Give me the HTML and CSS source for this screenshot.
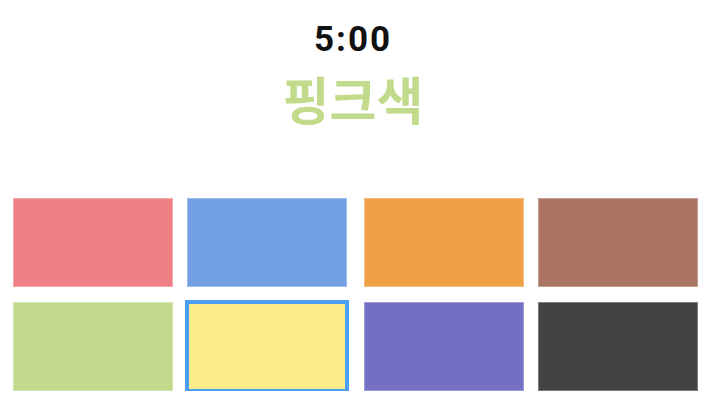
FILE: index.html
```html
<!DOCTYPE html>
<html lang="ko">
  <head>
    <meta charset="UTF-8" />
    <meta name="viewport" content="width=device-width, initial-scale=1.0" />
    <title>Color Picker</title>
    <link rel="stylesheet" href="styles.css">
  </head>
  <body>
    <div class="content">
      <div class="header">
        <div class="timer">5:00</div>
        <div class="color-name">핑크색</div>
      </div>
      <div class="palette">
        <div class="swatch red"></div>
        <div class="swatch blue"></div>
        <div class="swatch orange"></div>
        <div class="swatch brown"></div>
        <div class="swatch green"></div>
        <div class="swatch yellow selected"></div>
        <div class="swatch purple"></div>
        <div class="swatch dark"></div>
      </div>
    </div>
  </body>
</html>
```

FILE: styles.css
```css
body {
  font-family: Roboto, "Noto Sans CJK KR", sans-serif;
  margin: 0;
  background-color: #ffffff;
}
.content {
  padding: 0 16px 0 13px;
}
.header {
  display: flex;
  flex-direction: column;
  align-items: center;
  padding: 20px 5px 0 0;
}
.timer {
  font-size: 35px;
  font-weight: 700;
  line-height: 40px;
  color: #111;
  letter-spacing: 2px;
}
.color-name {
  font-family: "Noto Sans CJK KR", sans-serif;
  font-size: 51px;
  font-weight: 700;
  line-height: 60px;
  color: #c1da8b;
  margin-top: 8px;
}
.palette {
  display: grid;
  grid-template-columns: repeat(4, 160px);
  grid-auto-rows: 89px;
  column-gap: 14px;
  row-gap: 15px;
  margin-top: 70px;
}
.swatch {
  width: 160px;
  box-shadow: inset 0 0 0 1px rgba(255, 255, 255, 0.3);
}
.swatch:nth-child(4n+3),
.swatch:nth-child(4n) {
  margin-left: 3px;
}
.selected {
  outline: 4px solid #4a9ff5;
  outline-offset: -2px;
}
.red { background-color: #ef8186; }
.blue { background-color: #739fe5; }
.orange { background-color: #ef9f45; }
.brown { background-color: #aa7563; }
.green { background-color: #c1da8b; }
.yellow { background-color: #fdee8a; }
.purple { background-color: #756fc4; }
.dark { background-color: #434343; }
```
